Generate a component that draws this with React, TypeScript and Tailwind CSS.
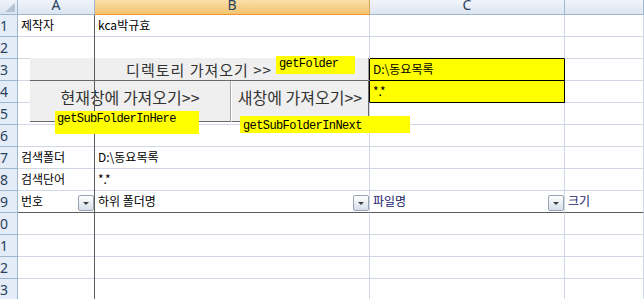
import React from "react";

type Cell = { text?: string; filter?: boolean; navy?: boolean; yellow?: boolean };

const COLS = ["A", "B", "C", "D"];

const data: Record<number, Record<string, Cell>> = {
  1: { A: { text: "제작자" }, B: { text: "kca박규효" } },
  3: { C: { text: "D:\\동요목록", yellow: true } },
  4: { C: { text: "*.*", yellow: true } },
  7: { A: { text: "검색폴더" }, B: { text: "D:\\동요목록" } },
  8: { A: { text: "검색단어" }, B: { text: "*.*" } },
  9: {
    A: { text: "번호", filter: true },
    B: { text: "하위 폴더명", filter: true },
    C: { text: "파일명", filter: true, navy: true },
    D: { text: "크기", navy: true },
  },
};

const FilterButton = () => (
  <span className="mb-[1px] flex h-[16px] w-[16px] shrink-0 items-center justify-center rounded-[2px] border border-[#9aa3b3] bg-linear-to-b from-[#ffffff] to-[#d6deea]">
    <span className="h-0 w-0 border-x-[3px] border-t-[3px] border-x-transparent border-t-[#404040]" />
  </span>
);

const rightBorder = (col: string, row: number) => {
  if (col === "A") return "border-r-[#5c5c5c]";
  if ((col === "B" || col === "C") && (row === 3 || row === 4)) return "border-r-black";
  return "border-r-[#d0d7e5]";
};

const bottomBorder = (col: string, row: number) => {
  if (row === 9) return "border-b-[#5c5c5c]";
  if (col === "C" && row >= 2 && row <= 4) return "border-b-black";
  return "border-b-[#d0d7e5]";
};

const App: React.FC = () => {
  const rows = Array.from({ length: 13 }, (_, i) => i + 1);

  return (
    <div className="relative h-[299px] w-[644px] overflow-hidden bg-white font-['Noto_Sans_CJK_KR',sans-serif] text-[12px] text-black">
      <div className="grid grid-cols-[18px_77px_275px_195px_1fr] auto-rows-[22px] grid-rows-[15px]">
        {/* column headers */}
        <div className="relative border-b border-r border-[#9eb6ce] bg-linear-to-b from-[#eef3fa] to-[#dae3ef]">
          <svg className="absolute bottom-[2px] right-[2px]" width="10" height="9" viewBox="0 0 10 9">
            <polygon points="10,0 10,9 0,9" fill="#b4c2d4" />
          </svg>
        </div>
        {COLS.map((c) => (
          <div
            key={c}
            className={
              c === "B"
                ? "flex justify-center overflow-hidden border-b border-r border-b-[#f29536] border-r-[#d9a65a] bg-linear-to-b from-[#fadfa9] to-[#f3c46e]"
                : "flex justify-center overflow-hidden border-b border-r border-[#9eb6ce] bg-linear-to-b from-[#f1f5fb] to-[#dce5f1]"
            }
          >
            {c !== "D" && (
              <span className="mt-[-2px] font-['Noto_Sans',sans-serif] text-[14px] leading-[14px] text-[#27415f]">
                {c}
              </span>
            )}
          </div>
        ))}

        {/* rows */}
        {rows.map((r) => (
          <React.Fragment key={r}>
            <div className="flex items-center justify-end overflow-hidden border-b border-r border-[#9eb6ce] bg-[#e4ecf7] pr-[9px] font-['Noto_Sans',sans-serif] text-[14px] leading-none text-[#27415f]">
              {r}
            </div>
            {COLS.map((c) => {
              const cell = data[r]?.[c];
              return (
                <div
                  key={c}
                  className={`flex items-end justify-between overflow-hidden whitespace-nowrap border-b border-r ${rightBorder(c, r)} ${bottomBorder(c, r)} ${cell?.yellow ? "bg-[#ffff00]" : ""}`}
                >
                  <span className={`pb-[4px] pl-[3px] leading-[14px] ${cell?.navy ? "text-[#17176b]" : ""}`}>
                    {cell?.text}
                  </span>
                  {cell?.filter && <FilterButton />}
                </div>
              );
            })}
          </React.Fragment>
        ))}
      </div>

      {/* form buttons lying over the sheet */}
      <div className="absolute left-[30px] top-[58px] flex h-[23px] w-[339px] items-center justify-center whitespace-nowrap border-b border-r border-b-[#6a6a6a] border-r-[#9a9a9a] bg-[#efefef] text-[15px] leading-none tracking-[1px] text-[#333333]">
        디렉토리 가져오기 &gt;&gt;
      </div>
      <div className="absolute left-[30px] top-[81px] flex h-[41px] w-[201px] items-start justify-center whitespace-nowrap border-b border-r border-b-[#6a6a6a] border-r-[#a8a8a8] bg-[#efefef] pt-[8px] text-[16px] leading-none text-[#333333]">
        현재창에 가져오기&gt;&gt;
      </div>
      <div className="absolute left-[231px] top-[81px] flex h-[41px] w-[138px] items-start justify-center overflow-hidden whitespace-nowrap border-b border-l border-r border-b-[#6a6a6a] border-l-white border-r-[#6a6a6a] bg-[#efefef] pt-[8px] text-[16px] leading-none text-[#333333]">
        새창에 가져오기&gt;&gt;
      </div>

      {/* freeze pane line */}
      <div className="absolute left-[94px] top-[15px] h-[284px] w-px bg-[#5c5c5c]" />

      {/* macro name labels */}
      <div className="absolute left-[276px] top-[56px] h-[18px] w-[79px] bg-[#ffff00] pl-[3px] pt-[1px] font-['Liberation_Mono',monospace] text-[12px] leading-[14px] tracking-[-0.6px]">
        getFolder
      </div>
      <div className="absolute left-[55px] top-[111px] h-[23px] w-[144px] bg-[#ffff00] pl-[2px] pt-[1px] font-['Liberation_Mono',monospace] text-[12px] leading-[14px] tracking-[-0.6px]">
        getSubFolderInHere
      </div>
      <div className="absolute left-[240px] top-[116px] h-[17px] w-[170px] bg-[#ffff00] pl-[3px] pt-[3px] font-['Liberation_Mono',monospace] text-[12px] leading-[14px] tracking-[-0.6px]">
        getSubFolderInNext
      </div>
    </div>
  );
};

export default App;
